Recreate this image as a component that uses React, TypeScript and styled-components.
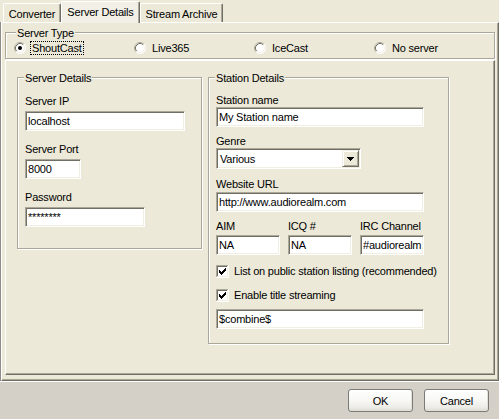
import React from "react";
import styled, { createGlobalStyle } from "styled-components";

const C = {
  face: "#ECE9D8",
  bottom: "#D4D0C8",
  light: "#F1EFE2",
  white: "#FFFFFF",
  shadow: "#ACA899",
  dark: "#716F64",
};

const Global = createGlobalStyle`
  html, body { margin: 0; padding: 0; background: ${C.bottom}; }
  body {
    font-family: "Liberation Sans", Arial, sans-serif;
    font-size: 11px;
    letter-spacing: -0.2px;
    color: #000;
  }
  * { box-sizing: border-box; }
`;

const Window = styled.div`
  width: 499px;
  height: 419px;
  display: flex;
  flex-direction: column;
  overflow: hidden;
  background: ${C.bottom};
`;

const Top = styled.div`
  height: 381px;
  background: ${C.face};
  display: flex;
  flex-direction: column;
`;

const TabStrip = styled.div`
  height: 22px;
  flex: none;
  display: flex;
  align-items: flex-end;
  padding-left: 3px;
`;

const Tab = styled.div<{ $active?: boolean; $w: number }>`
  width: ${(p) => p.$w}px;
  height: ${(p) => (p.$active ? 22 : 19)}px;
  margin-bottom: ${(p) => (p.$active ? -1 : 0)}px;
  position: relative;
  z-index: ${(p) => (p.$active ? 2 : 1)};
  padding-top: 4px;
  text-align: center;
  line-height: 13px;
  white-space: nowrap;
  background: ${(p) => (p.$active ? "#F1EFE6" : C.face)};
  border-top: 1px solid ${C.white};
  border-left: 1px solid ${C.white};
  border-right: 1px solid ${C.dark};
  box-shadow: inset -1px 0 0 ${C.shadow};
  border-radius: 2px 2px 0 0;
`;

const TabPage = styled.div`
  flex: 1;
  margin-left: 1px;
  display: flex;
  flex-direction: column;
  border-top: 1px solid ${C.white};
  border-left: 1px solid ${C.white};
  border-right: 1px solid ${C.dark};
  border-bottom: 1px solid ${C.dark};
  box-shadow: inset -1px -1px 0 ${C.shadow}, -1px 0 0 #8E8C84;
  padding: 9px 3px 5px 3px;
`;

const Group = styled.div<{ $w?: number; $h: number; $pt: number }>`
  position: relative;
  flex: none;
  width: ${(p) => (p.$w ? `${p.$w}px` : "auto")};
  height: ${(p) => p.$h}px;
  border: 1px solid ${C.shadow};
  box-shadow: inset 1px 1px 0 ${C.white}, 1px 1px 0 ${C.white};
  padding: ${(p) => p.$pt}px 7px 0 7px;
`;

const Legend = styled.span<{ $left: number }>`
  position: absolute;
  top: -6px;
  left: ${(p) => p.$left}px;
  padding: 0 1px;
  line-height: 13px;
  background: ${C.face};
  white-space: nowrap;
`;

const RadioRow = styled.div`
  display: grid;
  grid-template-columns: repeat(4, 120px);
  align-items: center;
  height: 100%;
  padding-left: 1px;
`;

const RadioOption = styled.label`
  display: flex;
  align-items: center;
  height: 14px;
`;

const OptionText = styled.span<{ $focus?: boolean }>`
  margin-left: 4px;
  padding: 0 1px;
  line-height: 12px;
  border: 1px dotted ${(p) => (p.$focus ? "#000" : "transparent")};
  white-space: nowrap;
`;

const InnerPanel = styled.div`
  flex: 1;
  margin-top: 1px;
  display: flex;
  align-items: flex-start;
  gap: 6px;
  border-top: 1px solid ${C.white};
  border-left: 1px solid ${C.white};
  border-right: 1px solid ${C.dark};
  border-bottom: 1px solid ${C.dark};
  box-shadow: inset -1px -1px 0 ${C.shadow};
  padding: 16px 0 0 11px;
`;

const Column = styled.div`
  display: flex;
  flex-direction: column;
  align-items: flex-start;
`;

const Label = styled.div<{ $mt?: number }>`
  margin-top: ${(p) => p.$mt ?? 0}px;
  line-height: 13px;
  white-space: nowrap;
`;

const Input = styled.div<{ $w: number; $mt?: number }>`
  width: ${(p) => p.$w}px;
  height: 20px;
  margin-top: ${(p) => p.$mt ?? 0}px;
  background: ${C.white};
  border: 1px solid;
  border-color: ${C.shadow} ${C.white} ${C.white} ${C.shadow};
  box-shadow: inset 1px 1px 0 ${C.dark}, inset -1px -1px 0 ${C.light};
  padding: 2px 2px 0 2px;
  line-height: 14px;
  white-space: nowrap;
  overflow: hidden;
`;

const Combo = styled.div<{ $w: number; $mt?: number }>`
  width: ${(p) => p.$w}px;
  height: 21px;
  margin-top: ${(p) => p.$mt ?? 0}px;
  display: flex;
  align-items: stretch;
  background: ${C.white};
  border: 1px solid;
  border-color: ${C.shadow} ${C.white} ${C.white} ${C.shadow};
  box-shadow: inset 1px 1px 0 ${C.dark}, inset -1px -1px 0 ${C.light};
  padding: 1px;
`;

const ComboText = styled.div`
  flex: 1;
  padding: 2px 0 0 2px;
  line-height: 14px;
`;

const ComboButton = styled.div`
  width: 17px;
  display: flex;
  align-items: center;
  justify-content: center;
  background: ${C.face};
  border: 1px solid;
  border-color: ${C.light} ${C.dark} ${C.dark} ${C.light};
  box-shadow: inset 1px 1px 0 ${C.white}, inset -1px -1px 0 ${C.shadow};
`;

const TripleRow = styled.div<{ $mt?: number }>`
  margin-top: ${(p) => p.$mt ?? 0}px;
  display: grid;
  grid-template-columns: repeat(3, 64px);
  column-gap: 8px;
`;

const CheckRow = styled.div<{ $mt?: number }>`
  margin-top: ${(p) => p.$mt ?? 0}px;
  display: flex;
  align-items: center;
  height: 13px;
  gap: 5px;
  line-height: 13px;
  white-space: nowrap;
`;

const Bottom = styled.div`
  flex: 1;
  border-top: 1px solid ${C.white};
  background: ${C.bottom};
  display: flex;
  justify-content: flex-end;
  align-items: flex-start;
  gap: 11px;
  padding: 7px 10px 0 0;
`;

const Button = styled.button`
  width: 65px;
  height: 23px;
  padding: 0;
  font-family: inherit;
  font-size: 11px;
  letter-spacing: -0.2px;
  color: #000;
  border: 1px solid #7B7A74;
  border-radius: 3px;
  background: linear-gradient(#FFFFFF 0%, #F7F7F4 50%, #ECEBE6 85%, #D9D7CF 100%);
  box-shadow: inset -1px -1px 0 #E2E0D8;
`;

const RadioIcon = ({ checked }: { checked?: boolean }) => (
  <svg width="12" height="12" viewBox="0 0 12 12">
    <circle cx="6" cy="6" r="5.5" fill="#fff" />
    <path d="M2.11 9.89 A5.5 5.5 0 0 1 9.89 2.11" fill="none" stroke={C.shadow} strokeWidth="1" />
    <path d="M2.82 9.18 A4.5 4.5 0 0 1 9.18 2.82" fill="none" stroke={C.dark} strokeWidth="1" />
    <path d="M9.89 2.11 A5.5 5.5 0 0 1 2.11 9.89" fill="none" stroke="#fff" strokeWidth="1" />
    <path d="M9.18 2.82 A4.5 4.5 0 0 1 2.82 9.18" fill="none" stroke={C.light} strokeWidth="1" />
    {checked && <circle cx="6" cy="6" r="2" fill="#000" />}
  </svg>
);

const CheckIcon = () => (
  <svg width="13" height="13" viewBox="0 0 13 13" shapeRendering="crispEdges">
    <rect x="0" y="0" width="13" height="13" fill="#fff" />
    <path d="M0 0h12v1H1v11H0z" fill={C.shadow} />
    <path d="M1 1h10v1H2v9H1z" fill={C.dark} />
    <path d="M12 0h1v13H0v-1h12z" fill="#fff" />
    <path d="M11 1h1v11H1v-1h10z" fill={C.light} />
    <path d="M3 5h1v3H3z M4 6h1v3H4z M5 7h1v3H5z M6 6h1v3H6z M7 5h1v3H7z M8 4h1v3H8z M9 3h1v3H9z" fill="#000" />
  </svg>
);

const ArrowIcon = () => (
  <svg width="7" height="4" viewBox="0 0 7 4" shapeRendering="crispEdges">
    <path d="M0 0h7v1H0z M1 1h5v1H1z M2 2h3v1H2z M3 3h1v1H3z" fill="#000" />
  </svg>
);

export default function App() {
  return (
    <>
      <Global />
      <Window>
        <Top>
          <TabStrip>
            <Tab $w={58}>Converter</Tab>
            <Tab $w={79} $active>Server Details</Tab>
            <Tab $w={83}>Stream Archive</Tab>
          </TabStrip>
          <TabPage>
            <Group $h={27} $pt={5}>
              <Legend $left={10}>Server Type</Legend>
              <RadioRow>
                <RadioOption>
                  <RadioIcon checked />
                  <OptionText $focus>ShoutCast</OptionText>
                </RadioOption>
                <RadioOption>
                  <RadioIcon />
                  <OptionText>Live365</OptionText>
                </RadioOption>
                <RadioOption>
                  <RadioIcon />
                  <OptionText>IceCast</OptionText>
                </RadioOption>
                <RadioOption>
                  <RadioIcon />
                  <OptionText>No server</OptionText>
                </RadioOption>
              </RadioRow>
            </Group>
            <InnerPanel>
              <Group $w={185} $h={172} $pt={17}>
                <Legend $left={6}>Server Details</Legend>
                <Column>
                  <Label>Server IP</Label>
                  <Input $w={160} $mt={3}>localhost</Input>
                  <Label $mt={12}>Server Port</Label>
                  <Input $w={56} $mt={3}>8000</Input>
                  <Label $mt={12}>Password</Label>
                  <Input $w={120} $mt={3}>********</Input>
                </Column>
              </Group>
              <Group $w={241} $h={267} $pt={16}>
                <Legend $left={6}>Station Details</Legend>
                <Column>
                  <Label>Station name</Label>
                  <Input $w={208}>My Station name</Input>
                  <Label $mt={8}>Genre</Label>
                  <Combo $w={145}>
                    <ComboText>Various</ComboText>
                    <ComboButton>
                      <ArrowIcon />
                    </ComboButton>
                  </Combo>
                  <Label $mt={9}>Website URL</Label>
                  <Input $w={208} $mt={1}>http://www.audiorealm.com</Input>
                  <TripleRow $mt={8}>
                    <Label>AIM</Label>
                    <Label>ICQ #</Label>
                    <Label>IRC Channel</Label>
                    <Input $w={64} $mt={2}>NA</Input>
                    <Input $w={64} $mt={2}>NA</Input>
                    <Input $w={64} $mt={2}>#audiorealm</Input>
                  </TripleRow>
                  <CheckRow $mt={10}>
                    <CheckIcon />
                    <span>List on public station listing (recommended)</span>
                  </CheckRow>
                  <CheckRow $mt={11}>
                    <CheckIcon />
                    <span>Enable title streaming</span>
                  </CheckRow>
                  <Input $w={208} $mt={7}>$combine$</Input>
                </Column>
              </Group>
            </InnerPanel>
          </TabPage>
        </Top>
        <Bottom>
          <Button>OK</Button>
          <Button>Cancel</Button>
        </Bottom>
      </Window>
    </>
  );
}
